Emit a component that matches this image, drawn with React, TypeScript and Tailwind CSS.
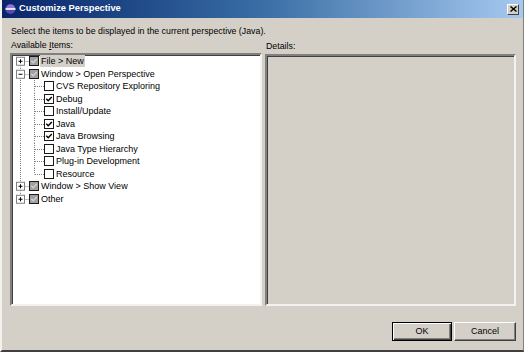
import React from "react";

const font = { fontFamily: '"Liberation Sans", Arial, sans-serif' };

function Expander({ open, first, last }: { open: boolean; first?: boolean; last?: boolean }) {
  return (
    <svg width="16" height="12.5" viewBox="0 0 16 12.5" className="shrink-0 block">
      {!first && <line x1="7.5" y1="0" x2="7.5" y2="2.25" stroke="#808080" strokeDasharray="1 1" />}
      {!last && <line x1="7.5" y1="10.25" x2="7.5" y2="12.5" stroke="#808080" strokeDasharray="1 1" />}
      <line x1="11.5" y1="6.5" x2="16" y2="6.5" stroke="#808080" strokeDasharray="1 1" />
      <rect x="3.5" y="2.25" width="8" height="8" fill="#fff" stroke="#808080" />
      <line x1="5.5" y1="6.25" x2="9.5" y2="6.25" stroke="#000" />
      {!open && <line x1="7.5" y1="4.25" x2="7.5" y2="8.25" stroke="#000" />}
    </svg>
  );
}

function ChildGutter({ last }: { last?: boolean }) {
  return (
    <svg width="31" height="12.5" viewBox="0 0 31 12.5" className="shrink-0 block">
      <line x1="7.5" y1="0" x2="7.5" y2="12.5" stroke="#808080" strokeDasharray="1 1" />
      <line x1="21.5" y1="0" x2="21.5" y2={last ? 6.5 : 12.5} stroke="#808080" strokeDasharray="1 1" />
      <line x1="22" y1="6.5" x2="31" y2="6.5" stroke="#808080" strokeDasharray="1 1" />
    </svg>
  );
}

function Check({ checked, grey }: { checked?: boolean; grey?: boolean }) {
  return (
    <div
      className={`w-[10px] h-[10px] shrink-0 border border-[#1a1a1a] flex items-center justify-center ${
        grey ? "bg-[#a0a0a0]" : "bg-white"
      }`}
    >
      {(checked || grey) && (
        <svg width="8" height="8" viewBox="0 0 8 8" className="block">
          <path d="M1.3 3.8 L3.2 5.7 L6.8 2" fill="none" stroke={grey ? "#d0d0d0" : "#000"} strokeWidth="1.5" />
        </svg>
      )}
    </div>
  );
}

function RootRow({
  label,
  open,
  first,
  last,
  selected,
}: {
  label: string;
  open?: boolean;
  first?: boolean;
  last?: boolean;
  selected?: boolean;
}) {
  return (
    <div className="flex items-center h-[12.5px]">
      <Expander open={!!open} first={first} last={last} />
      <Check grey />
      <span
        className={`ml-[1px] px-[1px] h-[12px] leading-[12px] text-[9px] text-black whitespace-nowrap ${
          selected ? "bg-[#d4d0c8]" : ""
        }`}
      >
        {label}
      </span>
    </div>
  );
}

function ChildRow({ label, checked, last }: { label: string; checked?: boolean; last?: boolean }) {
  return (
    <div className="flex items-center h-[12.5px]">
      <ChildGutter last={last} />
      <Check checked={checked} />
      <span className="ml-[2px] leading-[12px] text-[9px] text-black whitespace-nowrap">{label}</span>
    </div>
  );
}

export default function App() {
  const children = [
    { label: "CVS Repository Exploring", checked: false },
    { label: "Debug", checked: true },
    { label: "Install/Update", checked: false },
    { label: "Java", checked: true },
    { label: "Java Browsing", checked: true },
    { label: "Java Type Hierarchy", checked: false },
    { label: "Plug-in Development", checked: false },
    { label: "Resource", checked: false },
  ];
  return (
    <div
      className="w-[524px] h-[352px] bg-[#d4d0c8] flex flex-col border-l-[2px] border-l-[#f4f2ee] border-b-[2px] border-b-[#404040] border-r-[1px] border-r-[#808080] overflow-hidden"
      style={font}
    >
      {/* title bar */}
      <div className="h-[18px] shrink-0 flex items-center bg-gradient-to-r from-[#0a246a] via-[#3a6ea5] to-[#a6caf0] pl-[2px] pr-[4px]">
        <svg width="12" height="12" viewBox="0 0 12 12" className="shrink-0">
          <circle cx="6.5" cy="6" r="5" fill="#5a4aa8" />
          <path d="M2 6 A4.5 4.5 0 0 1 11 6" fill="#8a7ad8" />
          <rect x="1.5" y="5.2" width="10" height="1.6" fill="#fff" />
        </svg>
        <span className="ml-[3px] text-white font-bold text-[9.3px] leading-none">Customize Perspective</span>
        <div className="ml-auto w-[12px] h-[11px] bg-[#d4d0c8] border border-t-white border-l-white border-b-[#404040] border-r-[#404040] flex items-center justify-center">
          <svg width="7" height="6" viewBox="0 0 7 6">
            <path d="M0.5 0.5 L6.5 5.5 M6.5 0.5 L0.5 5.5" stroke="#000" strokeWidth="1.4" />
          </svg>
        </div>
      </div>

      <div className="flex-1 flex flex-col px-[8px] pr-[7px]">
        <div className="mt-[8px] h-[11px] leading-[11px] text-[8.8px] text-black pl-[1px]">
          Select the items to be displayed in the current perspective (Java).
        </div>
        <div className="flex gap-[3px] mt-[3px]">
          <div className="w-[252px] flex flex-col">
            <div className="h-[11px] leading-[11px] text-[8.8px] text-black pl-[1px]">
              Available <span className="underline">I</span>tems:
            </div>
            <div className="mt-[2px] h-[253px] bg-white border-2 border-t-[#808080] border-l-[#808080] border-b-[#f4f2ee] border-r-[#f4f2ee] shadow-[inset_1px_1px_0_#404040] pt-[0px] pl-[1px]">
              <RootRow label="File > New" first selected />
              <RootRow label="Window > Open Perspective" open />
              {children.map((c, i) => (
                <ChildRow key={c.label} label={c.label} checked={c.checked} last={i === children.length - 1} />
              ))}
              <RootRow label="Window > Show View" />
              <RootRow label="Other" last />
            </div>
          </div>
          <div className="flex-1 flex flex-col">
            <div className="h-[11px] leading-[11px] text-[8.8px] text-black pl-[1px] mt-[1px]">Details:</div>
            <div className="mt-[2px] h-[252px] bg-[#d4d0c8] border-2 border-t-[#808080] border-l-[#808080] border-b-[#f4f2ee] border-r-[#f4f2ee] shadow-[inset_1px_1px_0_#404040]" />
          </div>
        </div>
        <div className="flex justify-end gap-[2px] mt-[16px] pr-[0px]">
          <button className="w-[60px] h-[19px] bg-[#d4d0c8] border border-black shadow-[inset_1px_1px_0_#fff,inset_-1px_-1px_0_#404040,inset_-2px_-2px_0_#808080] text-[9px] text-black leading-none">
            OK
          </button>
          <button className="w-[62px] h-[19px] bg-[#d4d0c8] border border-t-white border-l-white border-b-[#404040] border-r-[#404040] shadow-[inset_-1px_-1px_0_#808080] text-[9px] text-black leading-none">
            Cancel
          </button>
        </div>
      </div>
    </div>
  );
}
